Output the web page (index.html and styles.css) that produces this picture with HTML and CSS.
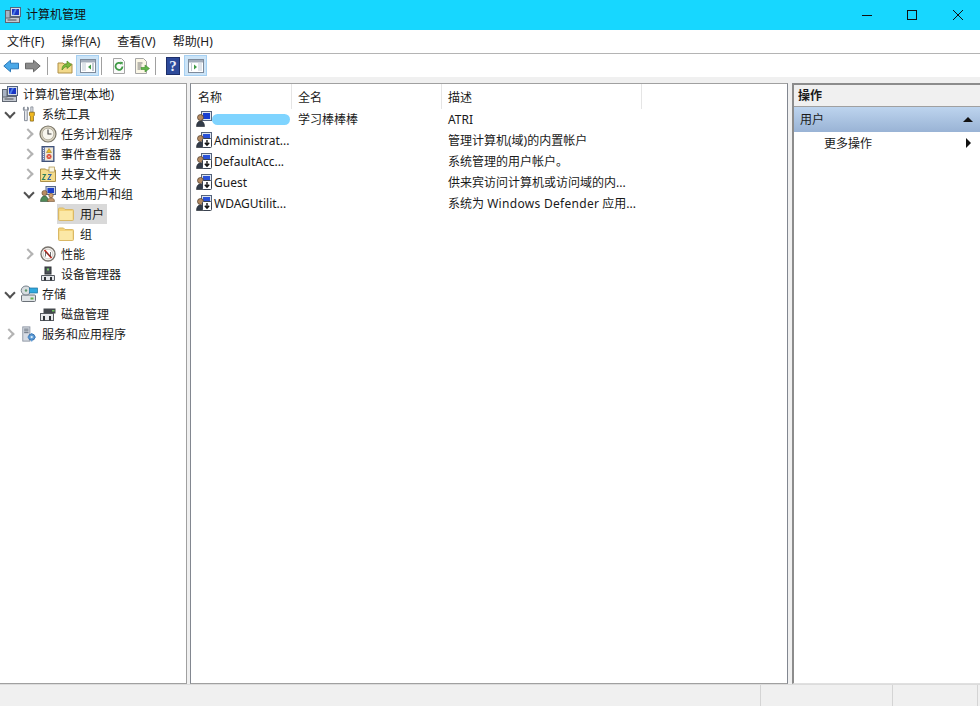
FILE: index.html
```html
<!DOCTYPE html>
<html lang="zh-CN">
<head>
  <meta charset="UTF-8">
  <title>计算机管理</title>
  <link rel="stylesheet" href="styles.css">
</head>
<body>
  <svg class="defs" width="0" height="0">
    <defs>
      <symbol id="i-computer" viewBox="0 0 16 16">
        <rect x="5.500" y=".5" width="10" height="9" fill="#d5dbe6" stroke="#56657f"/>
        <rect x="7" y="2" width="7" height="6" fill="#1a36c4"/>
        <path d="M7 8l3-6h2L9 8z" fill="#4f7fe6"/>
        <rect x=".5" y="10.500" width="14" height="5" fill="#c3c8d0" stroke="#5f6671"/>
        <rect x=".5" y="3.500" width="4.500" height="7.500" fill="#a9b3c3" stroke="#5f6671"/>
        <path d="M2.500 13h9" stroke="#4a4f57"/>
      </symbol>
      <symbol id="i-tools" viewBox="0 0 16 18">
        <path d="M2.500 1C1 2.500 1.500 5 3 6v10.500h3V6c1.500-1 2-3.500.5-5v3.500h-4z" fill="#eceef2" stroke="#6a7280" stroke-width=".9"/>
        <path d="M10 1h2.500v6H10z" fill="#d9dce2" stroke="#6a7280" stroke-width=".7"/>
        <path d="M8.500 7h5.500v3.500l-1 1v5.500H9.500v-5.500l-1-1z" fill="#f0b820" stroke="#7a5a08" stroke-width=".8"/>
      </symbol>
      <symbol id="i-clock" viewBox="0 0 18 18">
        <circle cx="9" cy="9" r="8" fill="#d8d2c0" stroke="#7a7668" stroke-width="1.200"/>
        <circle cx="9" cy="9" r="5.800" fill="#f8f6ee" stroke="#a8a494" stroke-width=".7"/>
        <path d="M9 4.500V9h3.500" fill="none" stroke="#444" stroke-width="1.100"/>
      </symbol>
      <symbol id="i-event" viewBox="0 0 16 16">
        <rect x="2" y=".5" width="12" height="15" fill="#6f80aa" stroke="#3f5178"/>
        <rect x="5" y="1.500" width="8" height="13" fill="#efe8d6"/>
        <path d="M3.500 2v12" stroke="#e3e8f2" stroke-dasharray="1 1"/>
        <path d="M9 2.500l2.500 4h-5z" fill="#f0c020" stroke="#8a6a10" stroke-width=".5"/>
        <circle cx="9" cy="10.500" r="2.500" fill="#d8452f"/>
        <path d="M8 9.500l2 2m0-2l-2 2" stroke="#fff" stroke-width=".7"/>
      </symbol>
      <symbol id="i-share" viewBox="0 0 16 16">
        <path d="M.5 3h5l1 1h9v11.500H.5z" fill="#f4dc8c" stroke="#ab9048"/>
        <rect x="9" y="1" width="5.500" height="5" fill="#fbf6de" stroke="#ab9048" stroke-width=".7"/>
        <path d="M2.500 8.500h3l-3 5h3" fill="none" stroke="#2f7f5a" stroke-width="1.100"/>
        <path d="M8 8.500h3l-3 5h3" fill="none" stroke="#2c62a8" stroke-width="1.100"/>
      </symbol>
      <symbol id="i-group" viewBox="0 0 16 16">
        <rect x="6" y=".5" width="9.500" height="8" fill="#c8d4e6" stroke="#56688a"/>
        <rect x="7.500" y="2" width="6.500" height="5" fill="#1d3fc8"/>
        <circle cx="4.500" cy="7" r="2.600" fill="#b98d62" stroke="#5f4630" stroke-width=".6"/>
        <path d="M.5 15.500c0-3.500 2-5.500 4-5.500s4 2 4 5.500z" fill="#4f8a58" stroke="#2f4f38" stroke-width=".6"/>
        <circle cx="11" cy="9.500" r="2.200" fill="#d0a070" stroke="#6f5030" stroke-width=".6"/>
        <path d="M7.500 15.500c0-2.500 1.500-3.500 3.500-3.500s3.500 1 3.500 3.500z" fill="#c2966a" stroke="#6f5030" stroke-width=".6"/>
      </symbol>
      <symbol id="i-folder" viewBox="0 0 16 16">
        <path d="M.5 3a1 1 0 011-1h4l1.500 1.500h7.500a1 1 0 011 1v9a1 1 0 01-1 1h-13a1 1 0 01-1-1z" fill="#f3d37a" stroke="#d9b866"/>
        <rect x="1.500" y="5" width="13" height="9" fill="#fbe8a6"/>
      </symbol>
      <symbol id="i-perf" viewBox="0 0 16 16">
        <circle cx="8" cy="8" r="7" fill="#f4f2ee" stroke="#77726c" stroke-width="1.300"/>
        <circle cx="8" cy="8" r="4.800" fill="#fff" stroke="#b3aea6" stroke-width=".6"/>
        <path d="M4.500 4l7 8" stroke="#cc2a1e" stroke-width="1.600"/>
        <path d="M5.500 10.500V6l5 4.500V6" fill="none" stroke="#333" stroke-width=".7"/>
      </symbol>
      <symbol id="i-device" viewBox="0 0 16 16">
        <rect x="5" y="1" width="6" height="7" fill="#4d5258" stroke="#2e3236"/>
        <rect x="7" y="2.500" width="2" height="2" fill="#7bcf6a"/>
        <path d="M1.500 9.500h13v5h-13z" fill="#e4e6ea" stroke="#565b62"/>
        <rect x="4" y="11" width="2" height="3.500" fill="#2e3236"/>
        <rect x="10" y="11" width="2" height="3.500" fill="#2e3236"/>
      </symbol>
      <symbol id="i-storage" viewBox="0 0 18 18">
        <rect x="1.500" y="10" width="14" height="6.500" rx="1" fill="#dfe3e6" stroke="#6b7178"/>
        <rect x="10.500" y="12.500" width="3" height="2" fill="#63b04c"/>
        <ellipse cx="6" cy="5.500" rx="4.800" ry="4.500" fill="#d8dde0" stroke="#75808a"/>
        <circle cx="6" cy="5.500" r="1.200" fill="#5f9a6c"/>
        <rect x="9.500" y="3" width="8" height="5" fill="#30a8de" stroke="#1d6f9c" stroke-width=".7"/>
      </symbol>
      <symbol id="i-disk" viewBox="0 0 16 16">
        <path d="M3.500 2.500h12v5h-12z" fill="#44484d"/>
        <rect x="12" y="4" width="2.500" height="1.500" fill="#6cc55a"/>
        <rect x=".5" y="7.500" width="13" height="7" fill="#e8eaec" stroke="#55595e"/>
        <rect x="3" y="10" width="2" height="4.500" fill="#2e3236"/>
        <rect x="9" y="10" width="2" height="4.500" fill="#2e3236"/>
      </symbol>
      <symbol id="i-services" viewBox="0 0 16 18">
        <rect x="1" y="1" width="8" height="16" fill="#d6dbe3" stroke="#8a93a0"/>
        <path d="M2.500 3.500h5M2.500 5.500h5M2.500 7.500h5" stroke="#5b6573"/>
        <circle cx="11" cy="12.500" r="3.600" fill="#5c9bd6" stroke="#2f6aa8"/>
        <circle cx="11" cy="12.500" r="1.300" fill="#dfeefa"/>
        <path d="M11 7.800v1.500M11 15.800v1.500M6.300 12.500h1.500M14.300 12.500h1.500" stroke="#5c9bd6" stroke-width="1.400"/>
      </symbol>
      <symbol id="i-user" viewBox="0 0 16 16">
        <rect x="5.500" y=".5" width="10" height="9" fill="#dfe6f0" stroke="#55637c"/>
        <rect x="7" y="2" width="7" height="6" fill="#1a3fd0"/>
        <circle cx="4.500" cy="6.500" r="3" fill="#b48a62" stroke="#4b3a2a" stroke-width=".7"/>
        <path d="M.5 15.500c0-3.500 1.500-5.500 4-5.500s4 2 4 5.500z" fill="#333c4a" stroke="#1d2229" stroke-width=".6"/>
      </symbol>
      <symbol id="i-user-down" viewBox="0 0 16 16">
        <rect x="5.500" y=".5" width="10" height="8" fill="#dfe6f0" stroke="#55637c"/>
        <rect x="7" y="2" width="7" height="5" fill="#2a52d8"/>
        <circle cx="4.500" cy="6.500" r="3" fill="#b48a62" stroke="#4b3a2a" stroke-width=".7"/>
        <path d="M.5 15.500c0-3.500 1.500-5.500 4-5.500s4 2 4 5.500z" fill="#333c4a" stroke="#1d2229" stroke-width=".6"/>
        <rect x="6.500" y="6.500" width="9" height="9" rx="1" fill="#fff" stroke="#3a4250"/>
        <path d="M11 8v5M8.800 10.800l2.200 2.400 2.200-2.400" fill="none" stroke="#111" stroke-width="1.400"/>
      </symbol>
      <symbol id="i-pane" viewBox="0 0 16 16">
        <rect x=".5" y="1.500" width="15" height="13" fill="#fff" stroke="#7e8a9a"/>
        <rect x="1" y="2" width="14" height="2.500" fill="#a3adbb"/>
      </symbol>
    </defs>
  </svg>

  <div class="window">
    <header class="titlebar">
      <svg class="title-icon"><use href="#i-computer"/></svg>
      <span class="title-text">计算机管理</span>
      <div class="caption">
        <span class="cap-btn">
          <svg width="10" height="10" viewBox="0 0 10 10"><path d="M0 5.500h10" stroke="#111"/></svg>
        </span>
        <span class="cap-btn">
          <svg width="10" height="10" viewBox="0 0 10 10"><rect x=".5" y=".5" width="9" height="9" fill="none" stroke="#111"/></svg>
        </span>
        <span class="cap-btn cap-close">
          <svg width="10" height="10" viewBox="0 0 10 10"><path d="M0 0l10 10M10 0L0 10" stroke="#111"/></svg>
        </span>
      </div>
    </header>

    <nav class="menubar">
      <span class="menu-item">文件(F)</span>
      <span class="menu-item">操作(A)</span>
      <span class="menu-item">查看(V)</span>
      <span class="menu-item">帮助(H)</span>
    </nav>

    <div class="toolbar">
      <span class="tool tool-back">
        <svg width="16" height="16" viewBox="0 0 16 16"><path d="M.8 8L7.500 2.200V5.200h8v5.600h-8v3z" fill="#4aa8e8" stroke="#2a78b8"/></svg>
      </span>
      <span class="tool tool-fwd">
        <svg width="16" height="16" viewBox="0 0 16 16"><path d="M15.200 8L8.500 2.200V5.200h-8v5.600h8v3z" fill="#8a8a8a" stroke="#666"/></svg>
      </span>
      <span class="tool-sep"></span>
      <span class="tool">
        <svg width="16" height="16" viewBox="0 0 16 16">
          <path d="M1 5h5l1 1h8v9H1z" fill="#f2d98a" stroke="#b09048"/>
          <path d="M5 12c0-4 2-6 5-6V3l4.500 3.800L10 10.500V8.500c-2 0-3 1.500-5 3.500z" fill="#7cb83c" stroke="#4f8a20" stroke-width=".7"/>
        </svg>
      </span>
      <span class="tool tool-on">
        <svg width="16" height="16"><use href="#i-pane"/><rect x="2" y="5" width="4" height="8" fill="#dfe4ea"/><path d="M11 6.500v5L8 9z" fill="#3f9a45"/><path d="M12 6h2M12 8h2M12 10h2M12 12h2" stroke="#8b97a8"/></svg>
      </span>
      <span class="tool-sep"></span>
      <span class="tool">
        <svg width="16" height="16" viewBox="0 0 16 16">
          <path d="M2.500.5h8l3 3v12h-11z" fill="#fafafa" stroke="#a5a5a5"/>
          <path d="M11.500 8.500a3.500 3.500 0 11-1.200-2.800" fill="none" stroke="#3f9a45" stroke-width="1.800"/>
          <path d="M8.800 3.800l3 .2-.4 3z" fill="#3f9a45"/>
        </svg>
      </span>
      <span class="tool">
        <svg width="16" height="16" viewBox="0 0 16 16">
          <path d="M1.500.5h8l3 3v12h-11z" fill="#fbf7e6" stroke="#a5a5a5"/>
          <path d="M3.500 5h5M3.500 7h4M3.500 9h4M3.500 11h3" stroke="#777"/>
          <path d="M7 9.500h4V7l4.500 3.500L11 14v-2.500H7z" fill="#5fb548" stroke="#3f8a2c" stroke-width=".6"/>
        </svg>
      </span>
      <span class="tool-sep"></span>
      <span class="tool">
        <svg width="16" height="18" viewBox="0 0 16 18">
          <rect x="1.500" y=".5" width="13" height="17" fill="#2d4a9a" stroke="#1d2f6a"/>
          <text class="help-mark" x="8" y="14">?</text>
        </svg>
      </span>
      <span class="tool tool-on">
        <svg width="16" height="16"><use href="#i-pane"/><path d="M3 6h1M3 8h1M3 10h1M3 12h1" stroke="#8b97a8"/><path d="M6 6.500v5L9 9z" fill="#3f9a45"/><rect x="10" y="5" width="4" height="8" fill="#dfe4ea"/></svg>
      </span>
    </div>

    <main class="panes">
      <aside class="pane tree">
        <div class="tree-row lvl0"><svg class="tree-icon"><use href="#i-computer"/></svg><span>计算机管理(本地)</span></div>
        <div class="tree-row lvl1"><span class="arrow open"></span><svg class="tree-icon"><use href="#i-tools"/></svg><span>系统工具</span></div>
        <div class="tree-row lvl2"><span class="arrow closed"></span><svg class="tree-icon icon-lg"><use href="#i-clock"/></svg><span>任务计划程序</span></div>
        <div class="tree-row lvl2"><span class="arrow closed"></span><svg class="tree-icon"><use href="#i-event"/></svg><span>事件查看器</span></div>
        <div class="tree-row lvl2"><span class="arrow closed"></span><svg class="tree-icon"><use href="#i-share"/></svg><span>共享文件夹</span></div>
        <div class="tree-row lvl2"><span class="arrow open"></span><svg class="tree-icon"><use href="#i-group"/></svg><span>本地用户和组</span></div>
        <div class="tree-row lvl3"><span class="sel-box"><svg class="tree-icon"><use href="#i-folder"/></svg><span>用户</span></span></div>
        <div class="tree-row lvl3"><span class="plain-box"><svg class="tree-icon"><use href="#i-folder"/></svg><span>组</span></span></div>
        <div class="tree-row lvl2"><span class="arrow closed"></span><svg class="tree-icon"><use href="#i-perf"/></svg><span>性能</span></div>
        <div class="tree-row lvl2"><span class="arrow"></span><svg class="tree-icon"><use href="#i-device"/></svg><span>设备管理器</span></div>
        <div class="tree-row lvl1"><span class="arrow open"></span><svg class="tree-icon icon-lg"><use href="#i-storage"/></svg><span>存储</span></div>
        <div class="tree-row lvl2"><span class="arrow"></span><svg class="tree-icon"><use href="#i-disk"/></svg><span>磁盘管理</span></div>
        <div class="tree-row lvl1"><span class="arrow closed"></span><svg class="tree-icon"><use href="#i-services"/></svg><span>服务和应用程序</span></div>
      </aside>

      <section class="pane list">
        <div class="list-head">
          <span class="col-name">名称</span>
          <span class="col-full">全名</span>
          <span class="col-desc">描述</span>
        </div>
        <div class="list-row">
          <span class="col-name"><svg class="row-icon"><use href="#i-user"/></svg><span class="smudge"></span></span>
          <span class="col-full">学习棒棒棒</span>
          <span class="col-desc">ATRI</span>
        </div>
        <div class="list-row">
          <span class="col-name"><svg class="row-icon"><use href="#i-user-down"/></svg>Administrat...</span>
          <span class="col-full"></span>
          <span class="col-desc">管理计算机(域)的内置帐户</span>
        </div>
        <div class="list-row">
          <span class="col-name"><svg class="row-icon"><use href="#i-user-down"/></svg>DefaultAcc...</span>
          <span class="col-full"></span>
          <span class="col-desc">系统管理的用户帐户。</span>
        </div>
        <div class="list-row">
          <span class="col-name"><svg class="row-icon"><use href="#i-user-down"/></svg>Guest</span>
          <span class="col-full"></span>
          <span class="col-desc">供来宾访问计算机或访问域的内...</span>
        </div>
        <div class="list-row">
          <span class="col-name"><svg class="row-icon"><use href="#i-user-down"/></svg>WDAGUtilit...</span>
          <span class="col-full"></span>
          <span class="col-desc">系统为 <span class="latin-wide">Windows Defender</span> 应用...</span>
        </div>
      </section>

      <aside class="pane actions">
        <div class="actions-head">操作</div>
        <div class="actions-group">
          <span>用户</span>
          <span class="tri-up"></span>
        </div>
        <div class="actions-item">
          <span>更多操作</span>
          <span class="tri-right"></span>
        </div>
      </aside>
    </main>

    <footer class="statusbar">
      <span class="status-cell status-main"></span>
      <span class="status-cell status-mid"></span>
      <span class="status-cell status-last"></span>
    </footer>
  </div>
</body>
</html>
```

FILE: styles.css
```css
* {
  box-sizing: border-box;
}
html, body {
  margin: 0;
  height: 100%;
}
body {
  font-family: "Noto Sans", "Noto Sans CJK SC", sans-serif;
  font-size: 12px;
  color: #1a1a1a;
  background: #fff;
  overflow: hidden;
}
.defs {
  position: absolute;
}
.window {
  height: 706px;
  display: flex;
  flex-direction: column;
}

.titlebar {
  height: 30px;
  background: #17d7ff;
  display: flex;
  align-items: center;
  padding-left: 5px;
}
.title-icon {
  width: 16px;
  height: 16px;
}
.title-text {
  margin-left: 5px;
  margin-top: -2px;
  color: #111;
}
.caption {
  margin-left: auto;
  display: flex;
}
.cap-btn {
  width: 45px;
  height: 30px;
  display: flex;
  align-items: center;
  justify-content: center;
}
.cap-close {
  width: 46px;
  padding-left: 1px;
}

.menubar {
  height: 24px;
  display: flex;
  align-items: center;
  gap: 17px;
  padding: 0 7px 2px;
  border-bottom: 1px solid #b4b4b4;
}

.toolbar {
  height: 23px;
  display: flex;
  align-items: center;
}
.tool {
  width: 23px;
  height: 21px;
  display: flex;
  align-items: center;
  justify-content: center;
}
.tool-back {
  width: 21px;
}
.tool-fwd {
  width: 24px;
}
.tool-on {
  background: #cce4f7;
  box-shadow: inset 0 0 0 1px #a6d0f2;
}
.tool-sep {
  width: 1px;
  height: 18px;
  margin: 0 5px 0 2px;
  background: #a0a0a0;
}
.help-mark {
  font-family: "Liberation Serif", serif;
  font-weight: bold;
  font-size: 15px;
  fill: #e8eefc;
  text-anchor: middle;
}

.panes {
  height: 607px;
  display: flex;
  background: #f0f0f0;
  padding-top: 6px;
  gap: 3px;
}
.pane {
  background: #fff;
  border-top: 1px solid #a0a0a0;
  border-bottom: 1px solid #a0a0a0;
}

.tree {
  width: 187px;
  border-right: 1px solid #a0a0a0;
}
.tree-row {
  height: 20px;
  display: flex;
  align-items: center;
  white-space: nowrap;
}
.tree-icon {
  width: 16px;
  height: 16px;
  flex: none;
  margin-right: 5px;
}
.icon-lg {
  width: 18px;
  height: 18px;
  margin-left: -1px;
  margin-right: 4px;
}
.arrow {
  width: 16px;
  height: 16px;
  flex: none;
  margin-right: 3px;
  display: flex;
  align-items: center;
  justify-content: center;
}
.arrow.closed::before,
.arrow.open::before {
  content: "";
  width: 6px;
  height: 6px;
  border-right: 2px solid #b3b3b3;
  border-bottom: 2px solid #b3b3b3;
}
.arrow.closed::before {
  transform: rotate(-45deg);
  margin-left: -3px;
}
.arrow.open::before {
  border-color: #505050;
  transform: rotate(45deg);
  margin-top: -3px;
}
.lvl0 {
  padding-left: 2px;
}
.lvl1 {
  padding-left: 2px;
}
.lvl2 {
  padding-left: 21px;
}
.lvl3 {
  padding-left: 57px;
}
.sel-box,
.plain-box {
  width: 50px;
  height: 20px;
  padding-left: 1px;
  display: flex;
  align-items: center;
}
.sel-box {
  background: #d9d9d9;
}
.sel-box .tree-icon,
.plain-box .tree-icon {
  margin-right: 6px;
}

.list {
  width: 598px;
  border-left: 1px solid #828790;
  border-right: 1px solid #828790;
}
.list-head {
  height: 25px;
  display: flex;
  align-items: center;
}
.list-head span {
  height: 25px;
  display: flex;
  align-items: center;
  border-right: 1px solid #e5e5e5;
}
.col-name {
  width: 101px;
  padding-left: 7px;
  display: flex;
  align-items: center;
  white-space: nowrap;
}
.col-full {
  width: 150px;
  padding-left: 6px;
}
.col-desc {
  width: 200px;
  padding-left: 6px;
  white-space: nowrap;
}
.list-row {
  height: 21px;
  padding-bottom: 1px;
  display: flex;
  align-items: center;
}
.list-row .col-name {
  padding-left: 5px;
}
.row-icon {
  width: 16px;
  height: 16px;
  flex: none;
  margin-right: 2px;
}
.smudge {
  width: 78px;
  height: 11px;
  margin-left: -2px;
  border-radius: 6px;
  background: #7fd4ff;
}
.latin-wide {
  letter-spacing: .3px;
}

.actions {
  flex: 1;
  margin-left: 1px;
  border-left: 2px solid #8c8c8c;
  border-top: 2px solid #8c8c8c;
  border-bottom-color: #e0e0e0;
}
.actions-head {
  height: 22px;
  background: #f0f0f0;
  border-bottom: 1px solid #a0a0a0;
  padding: 0 0 1px 4px;
  display: flex;
  align-items: center;
  font-weight: bold;
}
.actions-group {
  height: 25px;
  padding: 0 7px 1px 6px;
  display: flex;
  align-items: center;
  justify-content: space-between;
  background: linear-gradient(#bdd4ee, #99b3d5);
}
.tri-up {
  width: 0;
  height: 0;
  border-left: 5px solid transparent;
  border-right: 5px solid transparent;
  border-bottom: 5px solid #111;
}
.actions-item {
  height: 22px;
  padding: 0 9px 0 30px;
  display: flex;
  align-items: center;
  justify-content: space-between;
}
.tri-right {
  width: 0;
  height: 0;
  border-top: 5px solid transparent;
  border-bottom: 5px solid transparent;
  border-left: 5px solid #111;
}

.statusbar {
  flex: 1;
  display: flex;
  background: #f0f0f0;
  border-top: 1px solid #dcdcdc;
}
.status-cell {
  border-right: 1px solid #d4d4d4;
}
.status-main {
  width: 761px;
}
.status-mid {
  width: 132px;
}
.status-last {
  width: 85px;
}
```
